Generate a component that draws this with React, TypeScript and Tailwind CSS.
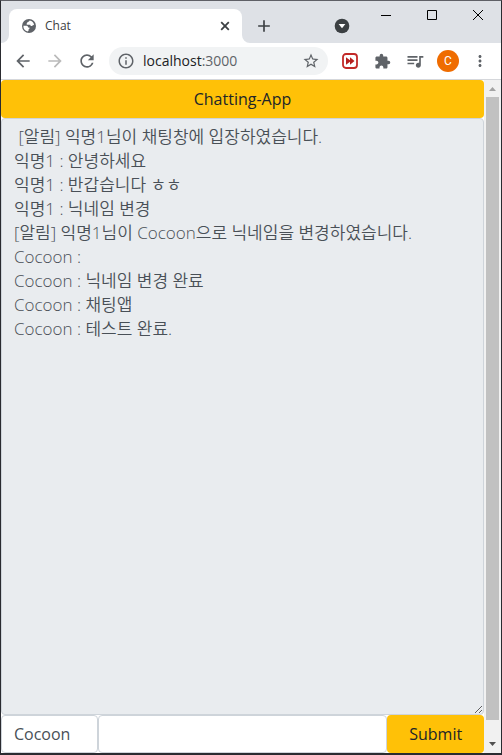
import {
  MdAdd,
  MdArrowBack,
  MdArrowForward,
  MdExtension,
  MdInfoOutline,
  MdMoreVert,
  MdQueueMusic,
  MdRefresh,
  MdStarBorder,
} from "react-icons/md";

const messages = [
  " [알림] 익명1님이 채팅창에 입장하였습니다.",
  "익명1 : 안녕하세요",
  "익명1 : 반갑습니다 ㅎㅎ",
  "익명1 : 닉네임 변경",
  "[알림] 익명1님이 Cocoon으로 닉네임을 변경하였습니다.",
  "Cocoon : ",
  "Cocoon : 닉네임 변경 완료",
  "Cocoon : 채팅앱",
  "Cocoon : 테스트 완료.",
];

function TabStrip() {
  return (
    <div className="flex h-[42px] items-end bg-[#dee1e6]">
      <svg width="8" height="8" viewBox="0 0 8 8" className="shrink-0" aria-hidden="true">
        <path d="M8 0v8H0a8 8 0 0 0 8-8z" fill="#fff" />
      </svg>
      <div className="flex h-[34px] w-[233px] min-w-0 items-center rounded-t-lg bg-white pr-3 pl-3">
        <svg width="16" height="16" viewBox="0 0 16 16" className="shrink-0" aria-hidden="true">
          <circle cx="8" cy="8" r="7" fill="#5f6368" />
          <path
            d="M8.600 2.600c-.2 1-.9 1.100-1.800 1.300-.7.200-.4 1-1 1.500-.6.400-.2 1.200.5 1.300h2.300c.9 0 1 .6 1 1.200h1.300c.6 0 .9-.5 1.300-.9l.9.200a5.600 5.600 0 0 0-4.500-4.600zM2.400 7.800h3c1 0 1.700.7 1.700 1.600h1.200c.5.8.1 1.600-.7 1.800v1.200l-.8 1.200A5.700 5.700 0 0 1 2.400 7.800z"
            fill="#fff"
          />
        </svg>
        <span className="ml-2 grow truncate text-xs text-[#3c4043]">Chat</span>
        <button aria-label="Close tab">
          <svg width="10" height="10" viewBox="0 0 10 10" stroke="#3c4043" strokeWidth="1.800">
            <path d="M1.200 1.200l7.600 7.600M8.800 1.200L1.200 8.800" />
          </svg>
        </button>
      </div>
      <svg width="8" height="8" viewBox="0 0 8 8" className="shrink-0" aria-hidden="true">
        <path d="M0 0v8h8a8 8 0 0 1-8-8z" fill="#fff" />
      </svg>
      <button aria-label="New tab" className="mb-[7px] ml-1 text-[#3c4043]">
        <MdAdd size={20} />
      </button>
      <div className="grow" />
      <button aria-label="Search tabs" className="mb-2 mr-3 flex">
        <svg width="18" height="18" viewBox="0 0 16 16">
          <circle cx="8" cy="8" r="6.500" fill="#3c4043" />
          <path d="M5 6.200h6L8 10z" fill="#fff" />
        </svg>
      </button>
      <div className="flex self-start text-black">
        <button aria-label="Minimize" className="flex h-7 w-[46px] items-center justify-center">
          <svg width="10" height="10" viewBox="0 0 10 10" stroke="currentColor">
            <path d="M0 5.5h10" />
          </svg>
        </button>
        <button aria-label="Maximize" className="flex h-7 w-[46px] items-center justify-center">
          <svg width="10" height="10" viewBox="0 0 10 10" fill="none" stroke="currentColor">
            <path d="M.5.5h9v9h-9z" />
          </svg>
        </button>
        <button aria-label="Close" className="flex h-7 w-[46px] items-center justify-center">
          <svg width="10" height="10" viewBox="0 0 10 10" stroke="currentColor">
            <path d="M0 0l10 10M10 0L0 10" />
          </svg>
        </button>
      </div>
    </div>
  );
}

function Toolbar() {
  return (
    <div className="flex h-[37px] items-center border-b border-[#d5d7db] bg-white pr-3 pl-3 text-[#5f6368]">
      <button aria-label="Back">
        <MdArrowBack size={20} />
      </button>
      <button aria-label="Forward" className="ml-3 text-[#bababa]">
        <MdArrowForward size={20} />
      </button>
      <button aria-label="Reload" className="ml-3">
        <MdRefresh size={20} />
      </button>
      <div className="ml-3 flex h-7 min-w-0 grow items-center rounded-full bg-[#f1f3f4] px-2">
        <MdInfoOutline size={18} className="shrink-0" />
        <div className="ml-2 grow truncate text-sm">
          <span className="text-[#202124]">localhost</span>:3000
        </div>
        <button aria-label="Bookmark this page">
          <MdStarBorder size={18} />
        </button>
      </div>
      <button aria-label="Fast forward extension" className="ml-3.5">
        <svg width="16" height="16" viewBox="0 0 16 16">
          <rect x="1" y="1" width="14" height="14" rx="3" fill="#fff" stroke="#c22a28" strokeWidth="1.800" />
          <path d="M4 4.200l4 3v-3L12.500 8 8 11.800v-3l-4 3z" fill="#b5201f" />
        </svg>
      </button>
      <button aria-label="Extensions" className="ml-4">
        <MdExtension size={17} />
      </button>
      <button aria-label="Media controls" className="ml-3.5">
        <MdQueueMusic size={20} />
      </button>
      <button
        aria-label="Profile"
        className="ml-3 flex size-[22px] shrink-0 items-center justify-center rounded-full bg-[#ef6c00] font-[Roboto] text-xs text-white"
      >
        C
      </button>
      <button aria-label="More" className="ml-3">
        <MdMoreVert size={18} />
      </button>
    </div>
  );
}

function ChatApp() {
  return (
    <main className="flex min-w-0 grow flex-col text-base">
      <h1 className="rounded bg-[#ffc107] py-[7px] text-center leading-6 text-[#212529]">Chatting-App</h1>
      <textarea
        aria-label="Chat log"
        readOnly
        defaultValue={messages.join("\n")}
        className="w-full grow resize-y rounded border border-[#ced4da] bg-[#e9ecef] px-3 py-1.5 text-[17px] leading-6 font-[350] text-[#495057] outline-none"
      />
      <form className="flex" onSubmit={(e) => e.preventDefault()}>
        <input
          aria-label="Nickname"
          defaultValue="Cocoon"
          className="h-[38px] w-1/5 rounded border border-[#ced4da] bg-white px-3 text-[#495057] outline-none"
        />
        <input
          aria-label="Message"
          className="h-[38px] w-3/5 rounded border border-[#ced4da] bg-white px-3 text-[#495057] outline-none"
        />
        <button type="submit" className="h-[38px] w-1/5 rounded bg-[#ffc107] text-[#212529]">
          Submit
        </button>
      </form>
    </main>
  );
}

function ScrollBar() {
  return (
    <div className="flex w-[17px] shrink-0 flex-col items-center bg-[#f1f1f1]" aria-hidden="true">
      <svg width="17" height="17" viewBox="0 0 17 17">
        <path d="M5 11h7L8.500 7z" fill="#a3a3a3" />
      </svg>
      <div className="w-[13px] grow bg-[#c1c1c1]" />
      <div className="h-4" />
      <svg width="17" height="17" viewBox="0 0 17 17">
        <path d="M5 6h7l-3.500 4z" fill="#505050" />
      </svg>
    </div>
  );
}

export default function App() {
  return (
    <div className="flex h-dvh flex-col border-x border-t border-b-2 border-[#2a2b30] border-t-[#5f6066] bg-white font-['Open_Sans','Noto_Sans_CJK_KR',sans-serif]">
      <TabStrip />
      <Toolbar />
      <div className="flex min-h-0 grow">
        <ChatApp />
        <ScrollBar />
      </div>
    </div>
  );
}
